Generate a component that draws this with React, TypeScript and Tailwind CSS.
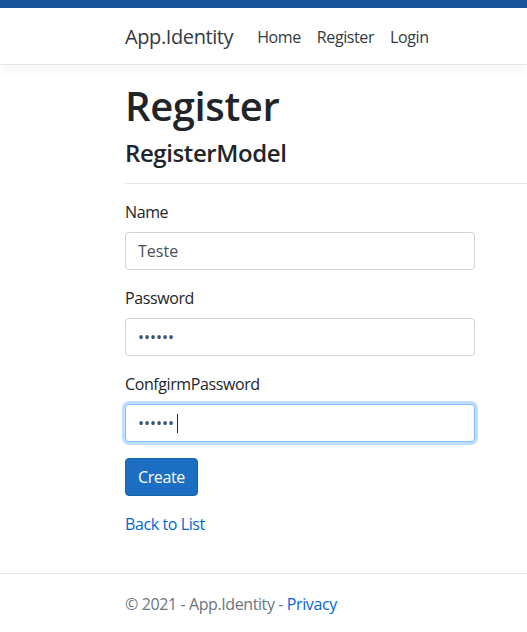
import React from "react";

const font = { fontFamily: '"Open Sans", "Noto Sans", Arial, sans-serif' };

function Field({ label, type, value, focused }: { label: string; type: string; value: string; focused?: boolean }) {
  return (
    <div className="mb-4 flex flex-col">
      <label className="mb-2 text-base leading-6 text-[#212529]">{label}</label>
      <div className="relative w-[350px]">
        <input
          type={type}
          defaultValue={value}
          className={
            "h-[38px] w-[350px] rounded-[4px] border bg-white px-3 text-base tracking-normal text-[#495057] outline-none " +
            (focused
              ? "border-[#80bdff] shadow-[0_0_0_3px_rgba(0,123,255,0.25)]"
              : "border-[#ced4da]")
          }
        />
        {focused && <span className="absolute left-[52px] top-[10px] h-[19px] w-px bg-[#212529]" />}
      </div>
    </div>
  );
}

export default function App() {
  return (
    <div className="flex h-[632px] flex-col overflow-hidden bg-white tracking-[-0.025em] text-[#212529]" style={font}>
      <div className="h-2 shrink-0 bg-[#175499]" />
      <header className="flex h-[57px] shrink-0 items-center border-b border-[#e6e6e6] pl-[125px] pt-px shadow-[0_4px_12px_rgba(0,0,0,0.05)]">
        <span className="mr-4 text-xl leading-[30px] text-[#343a40]">App.Identity</span>
        <nav className="flex text-base text-[#343a40]">
          <span className="px-2">Home</span>
          <span className="px-2">Register</span>
          <span className="px-2">Login</span>
        </nav>
      </header>

      <main className="mt-[17px] shrink-0 pl-[125px]">
        <h1 className="mb-2 text-[40px] font-semibold leading-[48px]">Register</h1>
        <h4 className="text-2xl font-semibold leading-[29px]">RegisterModel</h4>
        <hr className="my-4 border-t border-[rgba(0,0,0,0.1)]" />
        <form>
          <Field label="Name" type="text" value="Teste" />
          <Field label="Password" type="password" value="123456" />
          <Field label="ConfgirmPassword" type="password" value="123456" focused />
          <div className="mb-4">
            <button
              type="button"
              className="h-[38px] rounded-[4px] border border-[#1861ac] bg-[#1b6ec2] px-3 text-base text-white"
            >
              Create
            </button>
          </div>
        </form>
        <div className="leading-6">
          <a className="text-[#0366d6]">Back to List</a>
        </div>
      </main>

      <footer className="mt-[37px] shrink-0 border-t border-[#e5e5e5] pl-[125px] text-base leading-[60px] text-[#6c757d]">
        © 2021 - App.Identity - <a className="text-[#0366d6]">Privacy</a>
      </footer>
    </div>
  );
}
